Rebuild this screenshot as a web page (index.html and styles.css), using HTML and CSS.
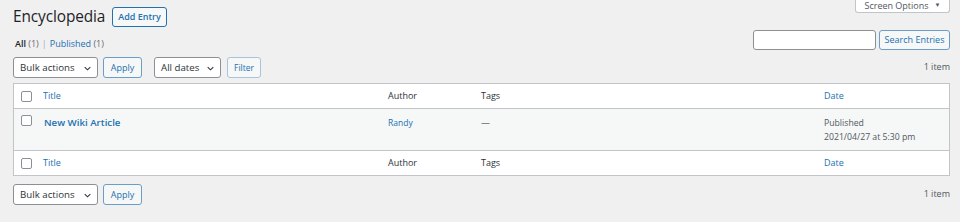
FILE: index.html
```html
<!DOCTYPE html>
<html lang="en">
<head>
<meta charset="utf-8">
<title>Encyclopedia</title>
<link rel="stylesheet" href="styles.css">
</head>
<body>
<div class="page">
  <div class="screen-meta">
    <button class="screen-options" type="button">Screen Options <span class="tri">▼</span></button>
  </div>
  <div class="wrap">
    <div class="title-row">
      <h1 class="page-title">Encyclopedia</h1>
      <a class="page-title-action" href="#">Add Entry</a>
    </div>
    <div class="filter-row">
      <ul class="subsubsub">
        <li><span class="current">All</span> <span class="count">(1)</span></li>
        <li class="sep">|</li>
        <li><a href="#">Published</a> <span class="count">(1)</span></li>
      </ul>
      <div class="search-box">
        <input class="search-input" type="search" aria-label="Search Entries">
        <button class="button" type="button">Search Entries</button>
      </div>
    </div>
    <div class="tablenav top">
      <div class="actions">
        <div class="select bulk">Bulk actions<svg class="chev" viewBox="0 0 8 5"><path d="M0.8 0.8 L4 4 L7.2 0.8" /></svg></div>
        <button class="button apply" type="button">Apply</button>
        <div class="select dates">All dates<svg class="chev" viewBox="0 0 8 5"><path d="M0.8 0.8 L4 4 L7.2 0.8" /></svg></div>
        <button class="button filter" type="button">Filter</button>
      </div>
      <div class="displaying">1 item</div>
    </div>
    <table class="list">
      <colgroup>
        <col class="c-cb"><col class="c-title"><col class="c-author"><col class="c-tags"><col class="c-date">
      </colgroup>
      <thead>
        <tr>
          <th class="cb"><span class="checkbox"></span></th>
          <th><a href="#">Title</a></th>
          <th>Author</th>
          <th>Tags</th>
          <th><a href="#">Date</a></th>
        </tr>
      </thead>
      <tbody>
        <tr class="alt">
          <td class="cb"><span class="checkbox"></span></td>
          <td><a class="row-title" href="#">New Wiki Article</a></td>
          <td><a class="small-link" href="#">Randy</a></td>
          <td><span class="dash">—</span></td>
          <td class="date">Published<br>2021/04/27 at 5:30 pm</td>
        </tr>
      </tbody>
      <tfoot>
        <tr>
          <th class="cb"><span class="checkbox"></span></th>
          <th><a href="#">Title</a></th>
          <th>Author</th>
          <th>Tags</th>
          <th><a href="#">Date</a></th>
        </tr>
      </tfoot>
    </table>
    <div class="tablenav bottom">
      <div class="actions">
        <div class="select bulk">Bulk actions<svg class="chev" viewBox="0 0 8 5"><path d="M0.8 0.8 L4 4 L7.2 0.8" /></svg></div>
        <button class="button apply" type="button">Apply</button>
      </div>
      <div class="displaying">1 item</div>
    </div>
  </div>
</div>
</body>
</html>
```

FILE: styles.css
```css
* { box-sizing: border-box; }
html, body { margin: 0; padding: 0; }
body {
  background: #f0f0f1;
  color: #3c434a;
  font-family: "Open Sans", "Noto Sans", sans-serif;
  font-size: 9px;
  line-height: 1.4;
  width: 960px;
  height: 222px;
  overflow: hidden;
}
a { color: #2271b1; text-decoration: none; }
.page { position: relative; }
.screen-meta {
  display: flex;
  justify-content: flex-end;
  padding-right: 10px;
  height: 0;
}
.screen-options {
  position: relative;
  z-index: 2;
  width: 95px;
  height: 13px;
  background: #fff;
  border: 1px solid #c3c4c7;
  border-top: none;
  border-radius: 0 0 3px 3px;
  font-family: inherit;
  font-size: 9px;
  color: #50575e;
  padding: 0 0 1px 0;
  line-height: 11px;
  display: flex;
  align-items: center;
  justify-content: center;
  gap: 6px;
}
.screen-options .tri { font-size: 6px; color: #50575e; }
.wrap { padding: 7px 10px 0 13px; }
.title-row { display: flex; align-items: center; height: 20px; }
.page-title {
  margin: 0;
  font-weight: 400;
  font-size: 15.4px;
  color: #1d2327;
  line-height: 20px;
  letter-spacing: -0.1px;
}
.page-title-action {
  margin-left: 7px;
  height: 20px;
  padding: 0 5px;
  border: 1px solid #2271b1;
  border-radius: 3px;
  background: #f6f7f7;
  font-weight: 600;
  font-size: 9px;
  line-height: 18px;
}
.filter-row {
  display: flex;
  justify-content: space-between;
  align-items: flex-end;
  margin-top: 3px;
  height: 20px;
}
.subsubsub {
  list-style: none;
  margin: 0 0 0 2px;
  padding: 0;
  display: flex;
  gap: 2px;
  line-height: 12px;
  color: #646970;
}
.subsubsub .current { color: #1d2327; font-weight: 600; }
.subsubsub .sep { color: #a7aaad; padding: 0 1px; }
.search-box { display: flex; gap: 3px; }
.search-input {
  width: 123px;
  height: 20px;
  border: 1px solid #8c8f94;
  border-radius: 3px;
  background: #fff;
  margin: 0;
}
.button {
  height: 20px;
  border: 1px solid #6a9dc9;
  border-radius: 3px;
  background: #f6f7f7;
  color: #2271b1;
  font-family: inherit;
  font-size: 9px;
  padding: 0 7px;
  margin: 0;
  line-height: 18px;
}
.search-box .button { width: 71px; padding: 0; }
.tablenav {
  display: flex;
  justify-content: space-between;
  align-items: center;
  height: 21px;
}
.tablenav.top { margin-top: 7px; }
.tablenav.bottom { margin-top: 8px; }
.actions { display: flex; align-items: center; }
.select {
  height: 21px;
  border: 1px solid #8c8f94;
  border-radius: 3px;
  background: #fff;
  color: #2c3338;
  font-size: 9.7px;
  line-height: 19px;
  padding-left: 6px;
  position: relative;
}
.select.bulk { width: 85px; }
.select.dates { width: 67px; margin-left: 12px; }
.chev {
  position: absolute;
  right: 6px;
  top: 8px;
  width: 7px;
  height: 5px;
  fill: none;
  stroke: #2c3338;
  stroke-width: 1.2;
}
.apply { width: 39px; margin-left: 5px; padding: 0; height: 21px; }
.filter { width: 34px; margin-left: 6px; padding: 0; height: 21px; font-size: 8.5px; border-color: #a9c3dc; }
.displaying { color: #50575e; margin-right: 0; }
.list {
  margin-top: 5px;
  width: 937px;
  border: 1px solid #c3c4c7;
  border-spacing: 0;
  table-layout: fixed;
  background: #fff;
}
.c-cb { width: 22px; }
.c-title { width: 345px; }
.c-author { width: 93px; }
.c-tags { width: 343px; }
.c-date { width: 132px; }
.list th, .list td {
  text-align: left;
  font-weight: 400;
  padding: 0 0 0 7px;
  vertical-align: middle;
}
.list th { height: 25px; color: #2c3338; font-size: 9px; }
.list thead th { border-bottom: 1px solid #c3c4c7; }
.list tfoot th { border-top: 1px solid #c3c4c7; }
.list .cb { padding: 0 0 0 7px; }
.checkbox {
  display: block;
  width: 11px;
  height: 11px;
  border: 1px solid #8c8f94;
  border-radius: 2px;
  background: #fff;
}
.list tbody tr.alt td { background: #f6f7f7; height: 41px; vertical-align: top; }
.list tbody td { padding-top: 7px; }
.list tbody td.cb { padding-top: 6px; }
.row-title { font-size: 9.7px; font-weight: 600; line-height: 14px; margin-left: 1px; }
.small-link { font-size: 8.5px; line-height: 14px; }
.dash { color: #2c3338; line-height: 14px; }
.date { color: #50575e; font-size: 8.7px; line-height: 14px; }
```
